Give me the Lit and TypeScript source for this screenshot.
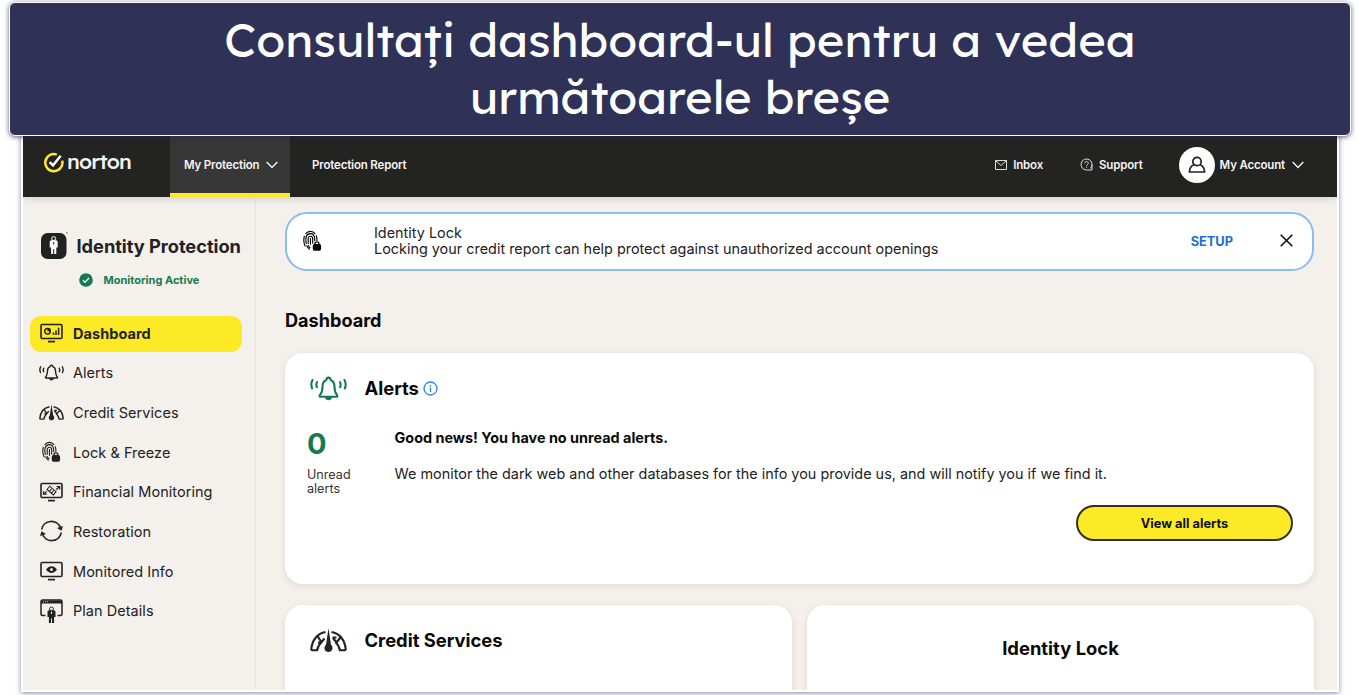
import { LitElement, html, svg, css } from "lit";
import { customElement } from "lit/decorators.js";

const bell = svg`<g fill="none" stroke="currentColor" stroke-width="2.100" stroke-linejoin="round" stroke-linecap="round">
<path d="M10.600 18c1.700-2 1.900-4 1.900-7.200 0-4 1.300-6.100 3.900-6.900.2-3 4-3 4.200 0 2.600.8 3.900 2.900 3.900 6.900 0 3.200.2 5.200 1.900 7.200 1.200 1.300 1.500 2.700.2 2.700H10.400c-1.300 0-1-1.400.2-2.700z"/>
<path d="M7 6.200c-.8 1.500-.8 3.400-.1 5M30 6.200c.8 1.500.8 3.400.1 5M2.500 4c-1.400 2.500-1.400 5.800-.3 8.500M34.500 4c1.400 2.500 1.400 5.800.3 8.500"/></g>
<path d="M15 21h7c-.3 4.300-6.700 4.300-7 0z" fill="currentColor"/>`;

const gauge = svg`<g fill="none" stroke="currentColor" stroke-width="2.100" stroke-linejoin="round">
<path d="M15.500 4C7.500 5.500 2 12 1.300 21.200c0 .8.400 1.100 1 1.100h4.800c.6-3.300 2-6 4.500-8l-3.800-5.800M8 14.800l4.500-1M11.500 14.200l3-3.700"/>
<path d="M21.500 4C29.500 5.500 35 12 35.700 21.200c0 .8-.4 1.100-1 1.100h-4.800c-.6-3.300-2-6-4.500-8M23 10l3.500 4.500 5-6.500M22.500 9.500h4"/></g>
<path d="M18.500.3l2.500 16.500c3 2.700 1.300 7.200-2.500 7.200s-5.500-4.500-2.500-7.200z" fill="currentColor"/>`;

const finger = svg`<g fill="none" stroke="currentColor" stroke-width="1.200" stroke-linecap="round">
<path d="M3 3.200C5.300 0 10.300 0 12.600 3.200M1.400 6C.6 9 .7 13 2.200 16.200M14 5.500c.6 1.600.7 3 .6 5M3.400 13.500C2.400 8 3.200 3.200 7.800 3.200c4 0 4.600 3.300 4.500 7.300M4 16c.6 1.500 1.500 2.700 2.700 3.500M5.500 13.500V8.300c0-3 4.700-3 4.700 0v5M5.700 15.800c.3 1 .8 1.500 1.700 2M7.850 8.500v6"/></g>
<rect x="10.300" y="14.200" width="8.700" height="7" rx="1.800" fill="currentColor"/>
<path d="M12.600 15v-1.200c0-2.400 4.100-2.400 4.100 0V15" fill="none" stroke="currentColor" stroke-width="1.400"/>`;

const screen = svg`<rect x="1" y="1.500" width="21" height="14" rx="1.300" fill="none" stroke="currentColor" stroke-width="1.600"/><path d="M8 18.600h7" stroke="currentColor" stroke-width="1.700"/>`;
const person = svg`<circle cx="5" cy="2.600" r="2" fill="none" stroke="currentColor" stroke-width="1"/><path d="M2.200 4.200h5.600l1.200 1.200v6.100H7.600V18H5.500v-5h-1v5H2.400v-6.500H1V5.400z" fill="currentColor"/>`;
const chevron = html`<svg class="chev" width="12" height="8" viewBox="0 0 12 8"><path d="M.7 1L6 6.500 11.300 1" fill="none" stroke="currentColor" stroke-width="1.400"/></svg>`;

const items = [
  { label: "Dashboard", box: "0 0 23 20", w: 23, h: 20, art: svg`${screen}<circle cx="7.500" cy="8.300" r="2.800" fill="none" stroke="currentColor" stroke-width="1.400"/><path d="M7.500 8.300V5.500h3v2.800z" fill="currentColor"/><path d="M13.500 12V9.500M16 12V7.500M18.600 12V4.700" stroke="currentColor" stroke-width="1.500"/>` },
  { label: "Alerts", box: "0 0 37 25", w: 25, h: 17, art: bell },
  { label: "Credit Services", box: "0 0 37 25", w: 25, h: 17, art: gauge },
  { label: "Lock & Freeze", box: "0 0 20 22", w: 19, h: 22, art: finger },
  { label: "Financial Monitoring", box: "0 0 23 20", w: 23, h: 20, art: svg`${screen}<path d="M3.500 9.200v3h3.200M3.800 12l3-2.600M16.500 4.500h3.200v3M19.500 4.700l-3.500 3" fill="none" stroke="currentColor" stroke-width="1.200"/><path d="M7 7.500l2.700-3.300 6.300 5.500-2.700 3.300zM9.500 9.500l2-2.800M11.600 11.300l2-2.800" fill="none" stroke="currentColor" stroke-width="1.100"/>` },
  { label: "Restoration", box: "0 0 23 22", w: 23, h: 22, art: svg`<path d="M1.700 9.500A9.800 9.800 0 0 1 20.600 8M21.300 12.500A9.800 9.800 0 0 1 2.400 14" fill="none" stroke="currentColor" stroke-width="1.600"/><path d="M17 8l6-2-1.500 4.800zM6 14l-6 2 1.500-4.800z" fill="currentColor"/>` },
  { label: "Monitored Info", box: "0 0 23 20", w: 23, h: 20, art: svg`${screen}<path d="M6 8.500c3-4.500 8-4.500 11 0-3 4.500-8 4.500-11 0z" fill="currentColor"/><circle cx="11.500" cy="8.500" r="1.500" fill="#f4f0ec"/>` },
  { label: "Plan Details", box: "0 0 23 24", w: 23, h: 24, art: svg`<path d="M5.500 16.500H2.500c-1 0-1.500-.5-1.500-1.500V2.500C1 1.500 1.500 1 2.500 1h18c1 0 1.500.5 1.500 1.500V15c0 1-.5 1.500-1.500 1.500h-3" fill="none" stroke="currentColor" stroke-width="1.500"/><path d="M1 1.500h21v3H1z" fill="currentColor"/><path d="M3 2.800h1M5 2.800h1M7 2.800h1" stroke="#f4f0ec" stroke-width=".8"/><g transform="translate(6.500 7.500) scale(1 .92)">${person}</g><path d="M11.500 12.500v2.500" stroke="#f4f0ec"/>` },
];

@customElement("app-root")
export class AppRoot extends LitElement {
  static styles = css`
    :host { display: block; width: 1359px; height: 695px; overflow: hidden; background: #fff; font-family: Inter, sans-serif; color: #222; }
    * { box-sizing: border-box; }
    svg { display: block; flex: none; }
    .banner { position: relative; z-index: 2; margin: 2px 8px 0 9px; height: 134px; background: #2f3157; border: 1px solid #fff; border-radius: 6px; box-shadow: 0 1px 5px rgba(40,42,90,.75); padding-top: 9px; text-align: center; color: #fff; font: 400 47.150px/56.500px Lexend, Lato, sans-serif; white-space: nowrap; }
    .shot { margin: 0 22px 0 23px; height: 554px; background: #f4f0ec; box-shadow: 0 0 0 2px #fff, 0 1px 5px 2px rgba(47,49,110,.6); display: flex; flex-direction: column; overflow: hidden; }
    .top { height: 61px; flex: none; background: #232322; color: #f4f4f4; display: flex; align-items: stretch; font-weight: 600; font-size: 11.500px; letter-spacing: -.17px; box-shadow: 0 2px 8px rgba(0,0,0,.13); position: relative; padding-right: 33px; }
    .logo { width: 147px; padding: 14px 0 0 20px; display: flex; gap: 3px; align-items: flex-start; font: 500 21px/24px Lexend, Inter, sans-serif; letter-spacing: -.85px; }
    .logo svg { margin-top: 2px; }
    .word { margin-top: -1px; }
    .tab { width: 120px; background: #373737; border-bottom: 4px solid #fdea26; display: flex; align-items: center; padding: 0 0 0 14px; gap: 7px; white-space: nowrap; }
    .link { display: flex; align-items: center; white-space: nowrap; padding-bottom: 4px; }
    .report { margin-left: 22px; }
    .grow { flex: 1; }
    .inbox { gap: 6px; margin-right: 37px; }
    .support { gap: 6px; margin-right: 36px; }
    .account { gap: 5px; }
    .account .chev { margin-left: 2px; }
    .avatar { width: 36px; height: 36px; border-radius: 50%; background: #fff; color: #222; display: grid; place-items: center; }
    .body { display: flex; flex: 1; min-height: 0; }
    .side { width: 233px; flex: none; border-right: 1px solid #e9e5e2; padding: 35px 0 0 7px; }
    .brand { display: flex; align-items: center; height: 28px; padding-left: 10px; gap: 8.500px; font-weight: 700; font-size: 18.250px; letter-spacing: -.04px; white-space: nowrap; }
    .status { display: flex; align-items: center; gap: 11px; height: 16px; margin: 12px 0 27.500px 48.500px; font-weight: 700; font-size: 11px; color: #147a50; }
    .item { display: flex; align-items: center; width: 212px; height: 35px; margin-bottom: 4.700px; border-radius: 11px; font-size: 14.500px; white-space: nowrap; letter-spacing: .04px; }
    .on { background: #fdea26; font-weight: 700; height: 36px; margin-bottom: 3.700px; padding-bottom: 1px; }
    .ico { width: 43px; display: grid; place-items: center; flex: none; }
    .main { flex: 1; padding: 15px 23px 0 29px; min-width: 0; }
    .notice { height: 59px; border: 2px solid #8bbcf2; border-radius: 22px; background: #fff; display: flex; align-items: center; padding: 0 19px 0 16px; font-size: 14.420px; line-height: 16.500px; }
    .msg { margin-left: 52px; flex: 1; white-space: nowrap; margin-bottom: 1px; }
    .setup { color: #1a6fd6; font-weight: 700; font-size: 12.800px; margin-right: 47px; padding-top: 1px; }
    .notice svg { margin-bottom: 2px; }
    h1 { margin: 37px 0 0; font-size: 18.100px; line-height: 24px; font-weight: 700; color: #090909; }
    h2 { margin: 0; font-size: 18.400px; line-height: 24px; font-weight: 700; color: #090909; white-space: nowrap; }
    .card { background: #fff; border-radius: 18px; box-shadow: 0 2px 7px rgba(70,60,50,.12); }
    .alerts { margin-top: 21px; height: 231px; padding: 22px 21px 0 22px; }
    .head { display: flex; align-items: center; height: 25px; padding-left: 3px; }
    .head svg { margin-top: 2px; }
    .head h2 { margin-left: 17.500px; margin-right: 4px; }
    .green { color: #147a50; }
    .info { display: flex; margin-top: 28px; height: 77px; }
    .count { width: 87.500px; font-size: 12.600px; line-height: 14px; color: #333; }
    .zero { font-weight: 700; font-size: 29px; line-height: 32px; margin-bottom: 8px; }
    .news { color: #090909; font-weight: 700; font-size: 14.400px; line-height: 20px; }
    .desc { color: #222; font-size: 14.420px; line-height: 20px; margin-top: 16px; white-space: nowrap; }
    .btn { display: grid; place-items: center; margin-left: auto; width: 217px; height: 36px; border: 2px solid #33301f; border-radius: 18px; background: #fdea26; font: 700 12.800px Inter, sans-serif; color: #111; padding: 0; }
    .row { display: grid; grid-template-columns: 507px 507px; gap: 15px; margin-top: 21px; }
    .small { height: 120px; padding: 22px; }
    .lock { text-align: center; padding-top: 31px; }
  `;

  render() {
    return html`
      <div class="banner"><div>Consultați dashboard-ul pentru a vedea</div><div>următoarele breșe</div></div>
      <div class="shot">
        <div class="top">
          <div class="logo"><svg width="21" height="21" viewBox="0 0 22 22" fill="none"><path d="M14.500 2.700A9 9 0 1 0 20.100 9" stroke="#fdea26" stroke-width="2.600"/><path d="M7 10.500l3.500 3.500L18.500 4" stroke="#fff" stroke-width="2.600"/></svg><span class="word">norton</span></div>
          <div class="tab"><span>My Protection</span>${chevron}</div>
          <div class="link report">Protection Report</div>
          <div class="grow"></div>
          <div class="link inbox"><svg width="12" height="10" viewBox="0 0 12 10" fill="none" stroke="#ddd"><path d="M.5.5h11v9H.5zM.5.5L6 5.500 11.500.5"/></svg>Inbox</div>
          <div class="link support"><svg width="13" height="13" viewBox="0 0 13 13" fill="none" stroke="#ddd"><path d="M10.500 10.300A5.500 5.500 0 1 0 6.500 12H12V6.500M4.800 5.300c0-2.500 3.500-2.300 3.500 0 0 1.200-1.700 1.200-1.700 2.700M6.600 8.800v1"/></svg>Support</div>
          <div class="link account"><div class="avatar"><svg width="18" height="18" viewBox="0 0 18 18" fill="none" stroke="#222" stroke-width="1.700"><circle cx="9" cy="5.500" r="4.200"/><path d="M5.800 8.800C3 10 1.500 12.500 1.400 16h15.200c-.1-3.500-1.600-6-4.400-7.200"/></svg></div>My Account ${chevron}</div>
        </div>
        <div class="body">
          <div class="side">
            <div class="brand"><svg width="28" height="28" viewBox="0 0 28 28"><rect x="1" y="1" width="25.500" height="26" rx="6.500" fill="#222"/><g color="#fff" transform="translate(8.700 4)">${person}</g><path d="M13.700 10v2.500" stroke="#222"/><path d="M26 1h2" stroke="#777"/></svg>Identity Protection</div>
            <div class="status"><svg width="14" height="14" viewBox="0 0 14 14"><circle cx="7" cy="7" r="6.800" fill="#147a50"/><path d="M4 7.200l2 2 4-4.200" fill="none" stroke="#fff" stroke-width="1.300"/></svg>Monitoring Active</div>
            ${items.map((it, i) => html`<div class="item ${i === 0 ? "on" : ""}"><span class="ico"><svg width=${it.w} height=${it.h} viewBox=${it.box}>${it.art}</svg></span>${it.label}</div>`)}
          </div>
          <div class="main">
            <div class="notice"><svg width="19" height="22" viewBox="0 0 20 22" color="#000">${finger}</svg><div class="msg">Identity Lock<br>Locking your credit report can help protect against unauthorized account openings</div><span class="setup">SETUP</span><svg width="13" height="13" viewBox="0 0 13 13"><path d="M.7.7l11.600 11.600M12.300.7L.7 12.300" stroke="#111" stroke-width="1.600"/></svg></div>
            <h1>Dashboard</h1>
            <div class="card alerts">
              <div class="head"><svg class="green" width="37" height="25" viewBox="0 0 37 25">${bell}</svg><h2>Alerts</h2><svg width="15" height="15" viewBox="0 0 15 15"><circle cx="7.500" cy="7.500" r="6.500" fill="none" stroke="#2684ee" stroke-width="1.300"/><path d="M7.500 6.500v4.500M7.500 4v1.500" stroke="#2684ee" stroke-width="1.400"/></svg></div>
              <div class="info"><div class="count"><div class="zero green">0</div>Unread<br>alerts</div><div><div class="news">Good news! You have no unread alerts.</div><div class="desc">We monitor the dark web and other databases for the info you provide us, and will notify you if we find it.</div></div></div>
              <button class="btn">View all alerts</button>
            </div>
            <div class="row">
              <div class="card small"><div class="head"><svg width="37" height="25" viewBox="0 0 37 25">${gauge}</svg><h2>Credit Services</h2></div></div>
              <div class="card small lock"><h2>Identity Lock</h2></div>
            </div>
          </div>
        </div>
      </div>`;
  }
}
